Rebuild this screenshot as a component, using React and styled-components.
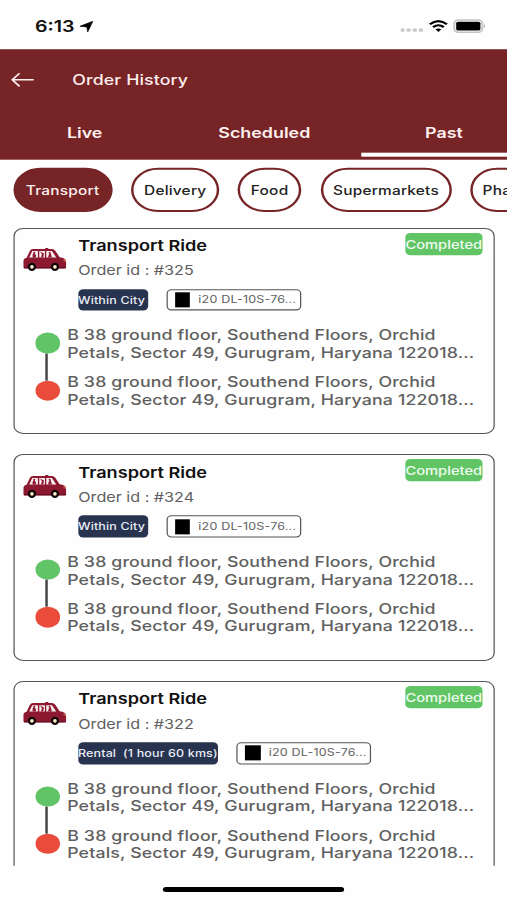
import styled, { createGlobalStyle } from "styled-components";

const GlobalStyle = createGlobalStyle`
    * {
        box-sizing: border-box;
    }
    body {
        margin: 0;
        background: #fefefe;
        font-family: Inter, "Liberation Sans", sans-serif;
    }
`

const Viewport = styled.div`
    width: 507px;
    height: 900px;
    overflow: hidden;
`

/* the phone is 414x896 points, stretched to fill the viewport */
const Phone = styled.div`
    width: 414px;
    height: 896px;
    display: flex;
    flex-direction: column;
    overflow: hidden;
    background: #fefefe;
    transform: scale(1.22464, 1.00446);
    transform-origin: 0 0;
`

const StatusBar = styled.div`
    flex: none;
    height: 49px;
    display: flex;
    align-items: center;
    padding: 3px 17.5px 0 28.5px;
    &>.time {
        font-size: 16px;
        font-weight: 600;
        line-height: 20px;
        color: #111;
        margin-right: 4.5px;
    }
    &>.spacer {
        flex: 1;
    }
    &>svg {
        display: block;
    }
    &>.signal {
        margin-top: 7px;
        margin-right: 4px;
    }
    &>.battery {
        margin-left: 4px;
    }
`

const Header = styled.div`
    flex: none;
    height: 109.7px;
    background: #772426;
    color: #fdf0ee;
    display: flex;
    flex-direction: column;
    overflow: hidden;
`

const TitleRow = styled.div`
    height: 60px;
    display: flex;
    align-items: center;
    padding-left: 9px;
    &>.title {
        margin-left: 31px;
        font-size: 14.5px;
        font-weight: 500;
        letter-spacing: 0.1px;
    }
`

const Tabs = styled.div`
    flex: 1;
    display: flex;
    margin-left: -4.2px;
`

const Tab = styled.div`
    flex: none;
    width: 146.7px;
    display: flex;
    flex-direction: column;
    align-items: center;
    font-size: 14.6px;
    font-weight: 600;
    line-height: 20px;
    padding-top: 13.4px;
    &::after {
        content: "";
        width: 135.6px;
        height: 4.3px;
        margin-top: 9.6px;
        background: ${({ $active }) => ($active ? "#fff" : "transparent")};
    }
`

const Chips = styled.div`
    flex: none;
    display: flex;
    gap: 15.8px;
    padding: 8.5px 0 0 10.7px;
`

const Chip = styled.div`
    flex: none;
    width: ${({ $width }) => $width}px;
    height: 44px;
    border: 2px solid #772426;
    border-radius: 22px;
    display: flex;
    align-items: center;
    justify-content: center;
    white-space: nowrap;
    font-size: 12.6px;
    font-weight: 500;
    letter-spacing: 0.17px;
    background: ${({ $active }) => ($active ? "#772426" : "#fff")};
    color: ${({ $active }) => ($active ? "#fdeeee" : "#222")};
`

const List = styled.div`
    flex: 1;
    min-height: 0;
    overflow: hidden;
    margin-top: 15.4px;
    padding: 0 10.2px 0 10.9px;
    display: flex;
    flex-direction: column;
    gap: 20px;
`

const Card = styled.div`
    flex: none;
    height: 205.8px;
    border: 1px solid #555;
    border-radius: 8px;
    background: #fefefe;
`

const CardTop = styled.div`
    display: flex;
    align-items: flex-start;
    height: 60px;
    padding: 4px 8.6px 0 7px;
    &>svg {
        margin-top: 15.5px;
    }
    &>.texts {
        flex: 1;
        margin-left: 9.6px;
        padding-top: 1.2px;
    }
    &>.texts>.name {
        font-size: 14.8px;
        font-weight: 600;
        line-height: 24.4px;
        color: #111;
    }
    &>.texts>.order {
        font-size: 13.2px;
        line-height: 24.2px;
        color: #606060;
    }
`

const Status = styled.div`
    width: 63.7px;
    height: 22px;
    border-radius: 4px;
    background: #61c565;
    color: #effbef;
    font-size: 12px;
    font-weight: 500;
    line-height: 23px;
    text-align: center;
    white-space: nowrap;
`

const Tags = styled.div`
    display: flex;
    gap: 15px;
    padding-left: 51.8px;
`

const RideType = styled.div`
    height: 21.5px;
    width: ${({ $width }) => $width}px;
    border-radius: 4px;
    background: #27334f;
    color: #e8ecf6;
    font-size: 10.2px;
    font-weight: 500;
    line-height: 22.4px;
    letter-spacing: 0.12px;
    white-space: pre;
`

const Vehicle = styled.div`
    height: 21.5px;
    width: 110px;
    border: 1px solid #555;
    border-radius: 4px;
    display: flex;
    align-items: center;
    padding-left: 6px;
    color: #606060;
    font-size: 10.2px;
    letter-spacing: 0.17px;
    line-height: 19px;
    white-space: nowrap;
    &>.color {
        width: 12.2px;
        height: 15px;
        margin-right: 6.8px;
        background: #000;
    }
`

const Route = styled.div`
    display: flex;
    padding: 14.6px 0 0 16.8px;
`

const Stops = styled.div`
    flex: none;
    width: 20.4px;
    margin-right: 5.8px;
    padding-top: 7.8px;
    display: flex;
    flex-direction: column;
    align-items: center;
    &>.line {
        width: 1.8px;
        height: 27px;
        margin-right: 2px;
        background: #444;
    }
`

const Dot = styled.div`
    width: 20.4px;
    height: 20.2px;
    border-radius: 50%;
    background: ${({ $color }) => $color};
`

const Addresses = styled.div`
    display: flex;
    flex-direction: column;
    gap: 12px;
    padding-top: 0.6px;
    white-space: nowrap;
    font-size: 14.5px;
    font-weight: 500;
    line-height: 17.45px;
    letter-spacing: 0.11px;
    color: #606060;
`

const HomeBar = styled.div`
    flex: none;
    height: 34.5px;
    padding-top: 21.5px;
    &>div {
        width: 147.5px;
        height: 5px;
        margin: 0 auto;
        border-radius: 3px;
        background: #000;
    }
`

function Car() {
    return (
        <svg width="35.4" height="23" viewBox="38 40 130 69" preserveAspectRatio="none">
            <path d="M38 98 V80 Q38 71 48 69 L58 48 Q60 43 68 43 H104 V40 H113 V43 H124 Q130 43 134 48 L147 67 Q166 69 168 82 V98 Q166 101 160 101 H42 Z" fill="#8d1930" />
            <path d="M56 68 L65 49 H82 V68 Z M86 49 H103 V68 H86 Z M107 49 H124 L137 68 H107 Z" fill="#f9edf0" />
            <path d="M66 68 V59 L71 54 L76 61 V68 Z M88 50 L94 58 L91 68 H98 L100 56 Z M112 68 L115 58 L120 54 L124 68 Z" fill="#8d1930" />
            <circle cx="71" cy="54" r="3" fill="#8d1930" />
            <circle cx="117" cy="54" r="3" fill="#8d1930" />
            <path d="M40 99 H166" stroke="#5c0e20" strokeWidth="3" />
            <path d="M159 75 L166 80" stroke="#e8705c" strokeWidth="4" />
            <circle cx="64" cy="96" r="9" fill="#fff2cf" stroke="#100507" strokeWidth="7" />
            <circle cx="133" cy="96" r="9" fill="#fff2cf" stroke="#100507" strokeWidth="7" />
        </svg>
    )
}

const ADDRESS = ["B 38 ground floor, Southend Floors, Orchid", "Petals, Sector 49, Gurugram, Haryana 122018..."]

function OrderCard({ id, type, typeWidth }) {
    return (
        <Card>
            <CardTop>
                <Car />
                <div className="texts">
                    <div className="name">Transport Ride</div>
                    <div className="order">Order id : #{id}</div>
                </div>
                <Status>Completed</Status>
            </CardTop>
            <Tags>
                <RideType $width={typeWidth}>{type}</RideType>
                <Vehicle>
                    <div className="color" />
                    i20 DL-10S-76...
                </Vehicle>
            </Tags>
            <Route>
                <Stops>
                    <Dot $color="#61c466" />
                    <div className="line" />
                    <Dot $color="#ea4c3b" />
                </Stops>
                <Addresses>
                    <div>{ADDRESS[0]}<br />{ADDRESS[1]}</div>
                    <div>{ADDRESS[0]}<br />{ADDRESS[1]}</div>
                </Addresses>
            </Route>
        </Card>
    )
}

const chips = [
    { label: "Transport", width: 81 },
    { label: "Delivery", width: 71.2 },
    { label: "Food", width: 51.4 },
    { label: "Supermarkets", width: 107 },
    { label: "Pharmacy", width: 81 },
]

const orders = [
    { id: 325, type: "Within City", typeWidth: 57.3 },
    { id: 324, type: "Within City", typeWidth: 57.3 },
    { id: 322, type: "Rental  (1 hour 60 kms)", typeWidth: 114.8 },
]

export default function App() {
    return (
        <Viewport>
            <GlobalStyle />
            <Phone>
                <StatusBar>
                    <div className="time">6:13</div>
                    <svg width="11" height="11" viewBox="0 0 11 11">
                        <path d="M0.2 5.2 L10.8 0.2 L6.6 10.9 L5.9 5.8 Z" fill="#000" stroke="#000" strokeWidth="0.6" strokeLinejoin="round" />
                    </svg>
                    <div className="spacer" />
                    <svg className="signal" width="19" height="4" viewBox="0 0 19 4">
                        {[0, 5, 10, 15].map((x) => <rect key={x} x={x} y="0.3" width="3.4" height="3.4" rx="1" fill="#c8c8c8" />)}
                    </svg>
                    <svg width="16" height="12" viewBox="0 0 16 12">
                        <path d="M1 4.2 Q8 -2.2 15 4.2 M3.6 7 Q8 3.2 12.4 7" stroke="#000" strokeWidth="2" fill="none" />
                        <path d="M5.6 9.2 Q8 7.3 10.4 9.2 L8 11.8 Z" fill="#000" />
                    </svg>
                    <svg className="battery" width="27" height="14" viewBox="0 0 27 14">
                        <rect x="0.9" y="0.9" width="23" height="12.2" rx="3.5" fill="#fff" stroke="#c4c4c4" strokeWidth="1.6" />
                        <rect x="2.5" y="2.6" width="19.8" height="8.8" rx="1.5" fill="#000" />
                        <path d="M25.2 5 Q26.8 7 25.2 9 Z" fill="#999" />
                    </svg>
                </StatusBar>
                <Header>
                    <TitleRow>
                        <svg width="19" height="15" viewBox="0 0 19 15">
                            <path d="M18.5 7.5 H1 M7 1 L1 7.5 L7 14" stroke="#fdf0ee" strokeWidth="1.5" fill="none" />
                        </svg>
                        <div className="title">Order History</div>
                    </TitleRow>
                    <Tabs>
                        <Tab>Live</Tab>
                        <Tab>Scheduled</Tab>
                        <Tab $active>Past</Tab>
                    </Tabs>
                </Header>
                <Chips>
                    {chips.map((c, i) => <Chip key={c.label} $width={c.width} $active={i === 0}>{c.label}</Chip>)}
                </Chips>
                <List>
                    {orders.map((o) => <OrderCard key={o.id} {...o} />)}
                </List>
                <HomeBar><div /></HomeBar>
            </Phone>
        </Viewport>
    )
}
